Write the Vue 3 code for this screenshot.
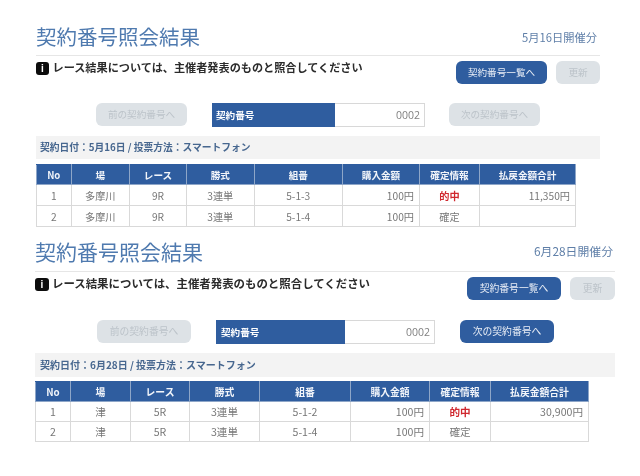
<template>
  <div class="page">
    <section v-for="panel in panels" :key="panel.id" class="panel" :class="panel.id">
      <header class="head">
        <h1 class="title">契約番号照会結果</h1>
        <span class="held">{{ panel.held }}</span>
      </header>

      <div class="notice-row">
        <p class="notice">
          <span class="info-icon">i</span>
          <span class="notice-text">レース結果については、主催者発表のものと照合してください</span>
        </p>
        <div class="actions">
          <button class="btn primary list-btn">契約番号一覧へ</button>
          <button class="btn off update-btn">更新</button>
        </div>
      </div>

      <div class="pager">
        <button class="btn off nav-btn">前の契約番号へ</button>
        <div class="number-box">
          <span class="number-label">契約番号</span>
          <span class="number-value">0002</span>
        </div>
        <button class="btn nav-btn" :class="panel.nextOn ? 'primary' : 'off'">次の契約番号へ</button>
      </div>

      <div class="band">{{ panel.band }}</div>

      <table class="results">
        <colgroup>
          <col v-for="w in panel.cols" :key="w" :style="{ width: w + 'px' }" />
        </colgroup>
        <thead>
          <tr>
            <th v-for="h in headers" :key="h">{{ h }}</th>
          </tr>
        </thead>
        <tbody>
          <tr v-for="row in panel.rows" :key="row.no">
            <td>{{ row.no }}</td>
            <td>{{ panel.place }}</td>
            <td>{{ panel.race }}</td>
            <td>3連単</td>
            <td>{{ row.combo }}</td>
            <td class="right">100円</td>
            <td :class="{ hit: row.status === '的中' }">{{ row.status }}</td>
            <td class="right">{{ row.payout }}</td>
          </tr>
        </tbody>
      </table>
    </section>
  </div>
</template>

<script setup>
const headers = ['No', '場', 'レース', '勝式', '組番', '購入金額', '確定情報', '払戻金額合計']

const panels = [
  {
    id: 'first',
    held: '5月16日開催分',
    band: '契約日付：5月16日 / 投票方法：スマートフォン',
    nextOn: false,
    place: '多摩川',
    race: '9R',
    cols: [34.5, 58.5, 57, 67.5, 88.5, 77, 60, 96],
    rows: [
      { no: 1, combo: '5-1-3', status: '的中', payout: '11,350円' },
      { no: 2, combo: '5-1-4', status: '確定', payout: '' }
    ]
  },
  {
    id: 'second',
    held: '6月28日開催分',
    band: '契約日付：6月28日 / 投票方法：スマートフォン',
    nextOn: true,
    place: '津',
    race: '5R',
    cols: [35, 60, 59, 70, 91, 79, 61, 98],
    rows: [
      { no: 1, combo: '5-1-2', status: '的中', payout: '30,900円' },
      { no: 2, combo: '5-1-4', status: '確定', payout: '' }
    ]
  }
]
</script>

<style>
body {
  background: #fff;
}
</style>

<style scoped>
.page {
  width: 640px;
  height: 476px;
  overflow: hidden;
  padding-top: 24px;
  box-sizing: border-box;
  font-family: "Noto Sans CJK JP", "Open Sans", sans-serif;
  color: #777;
  filter: blur(0.35px);
}

.panel {
  margin-left: 36px;
  width: 564px;
}

.panel.second {
  margin-left: 35px;
  width: 580px;
  margin-top: 13px;
}

.head {
  display: flex;
  justify-content: space-between;
  align-items: center;
  height: 31px;
  border-bottom: 1px solid #e6e6e6;
}

.title {
  margin: 0 0 8px;
  font-size: 20.5px;
  font-weight: 400;
  line-height: 26px;
  color: #4f7aaf;
}

.second .title {
  font-size: 21px;
  margin-bottom: 10px;
}

.held {
  font-size: 11.25px;
  color: #5f7fa8;
  padding-right: 3px;
  margin-bottom: 6px;
}

.second .held {
  font-size: 11.85px;
  padding-right: 2px;
  margin-bottom: 10px;
}

.notice-row {
  display: flex;
  justify-content: space-between;
  align-items: flex-start;
  padding-top: 5px;
  height: 47px;
  box-sizing: border-box;
}

.second .notice-row {
  height: 48px;
}

.notice {
  display: flex;
  align-items: center;
  gap: 3.5px;
  margin: 1px 0 0;
  font-size: 11.15px;
  font-weight: 700;
  line-height: 15px;
  color: #2b2b2b;
}

.second .notice {
  gap: 3px;
  font-size: 11.43px;
}

.notice-text {
  margin-top: -2px;
}

.info-icon {
  width: 13px;
  height: 13px;
  border-radius: 3px;
  background: #0c0c0c;
  color: #fff;
  font: 700 10px/13px "Liberation Sans", sans-serif;
  text-align: center;
  flex: none;
}

.second .info-icon {
  width: 14px;
}

.actions {
  display: flex;
  gap: 9px;
}

.btn {
  height: 23px;
  padding: 0;
  border: 0;
  border-radius: 6px;
  font-family: inherit;
  font-size: 9.6px;
  line-height: 23px;
}

.second .btn {
  font-size: 9.8px;
}

.primary {
  background: #2f5d9f;
  color: #e9eef6;
}

.off {
  background: #dde2e6;
  color: #bcc3c9;
}

.list-btn {
  width: 91px;
}

.update-btn {
  width: 44px;
}

.second .list-btn {
  width: 94px;
}

.second .update-btn {
  width: 45px;
}

.pager {
  display: flex;
  align-items: flex-start;
  padding-left: 60px;
  height: 33px;
}

.second .pager {
  padding-left: 62px;
}

.nav-btn {
  width: 91px;
}

.second .nav-btn {
  width: 94px;
}

.number-box {
  display: flex;
  width: 213px;
  height: 24px;
  margin: 0 24px 0 25px;
  box-sizing: border-box;
  border: 1px solid #d8d8d8;
  border-left: 0;
  font-size: 9.6px;
  line-height: 22px;
}

.second .number-box {
  width: 219px;
  margin: 0 25px;
}

.number-label {
  width: 123px;
  margin: -1px 0;
  padding-left: 4px;
  box-sizing: border-box;
  background: #2f5d9f;
  color: #fff;
  font-weight: 700;
  line-height: 24px;
}

.second .number-label {
  width: 129px;
  padding-left: 5px;
}

.number-value {
  flex: 1;
  padding-right: 4px;
  text-align: right;
  font-family: "Open Sans", sans-serif;
  font-size: 10.5px;
  color: #808080;
}

.band {
  height: 23px;
  padding-left: 4px;
  background: #f3f3f3;
  color: #47678f;
  font-size: 9.75px;
  font-weight: 700;
  line-height: 23px;
}

.second .band {
  height: 24px;
  padding-left: 5px;
  font-size: 10px;
  line-height: 24px;
}

.results {
  margin-top: 5px;
  border-collapse: collapse;
  table-layout: fixed;
  font-size: 10.2px;
}

.second .results {
  margin-top: 4px;
  font-size: 10.6px;
}

.results th,
.results td {
  height: 20px;
  padding: 0;
  box-sizing: border-box;
  border: 1px solid #d9d9d9;
  text-align: center;
}

.first .results td {
  height: 21px;
}

.results th {
  background: #2f5d9f;
  border-color: #8ea6c8;
  border-top-color: #2f5d9f;
  color: #f2f5fa;
  font-size: 9.6px;
  font-weight: 700;
}

.second .results th {
  font-size: 9.8px;
}

.results td.right {
  padding-right: 5px;
  text-align: right;
}

.results td.hit {
  color: #d0282e;
  font-weight: 700;
}
</style>
